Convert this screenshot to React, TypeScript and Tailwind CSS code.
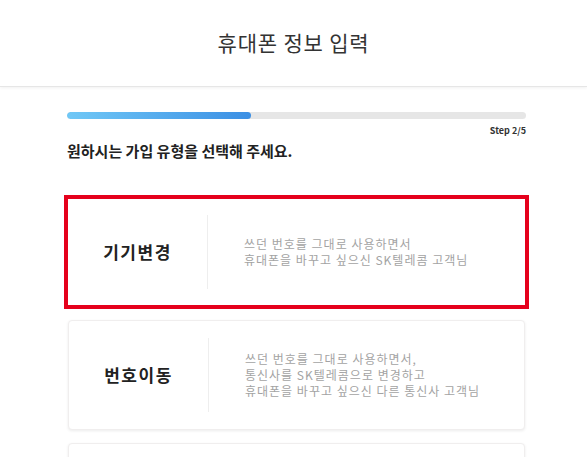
import React from 'react';

const font = { fontFamily: '"Noto Sans CJK KR", "Noto Sans", sans-serif' };

type Plan = { title: string; lines: string[]; selected?: boolean };

const plans: Plan[] = [
    { title: '기기변경', lines: ['쓰던 번호를 그대로 사용하면서', '휴대폰을 바꾸고 싶으신 SK텔레콤 고객님'], selected: true },
    { title: '번호이동', lines: ['쓰던 번호를 그대로 사용하면서,', '통신사를 SK텔레콤으로 변경하고', '휴대폰을 바꾸고 싶으신 다른 통신사 고객님'] },
];

const PlanCard: React.FC<{ plan: Plan }> = ({ plan }) => {
    const box = plan.selected
        ? 'border-4 border-[#e5001c] -mx-[4px] h-[114px]'
        : 'border border-[#f0eeee] rounded-[4px] shadow-[0_1px_3px_rgba(0,0,0,0.08)] h-[110px]';
    return (
        <div className={`bg-white flex items-center ${box}`}>
            <div className="flex items-center justify-center shrink-0 w-[139px]">
                <span className="text-[17px] font-bold text-[#222] tracking-[1.5px]">{plan.title}</span>
            </div>
            <div className="w-px h-[74px] bg-[#eeeeee]" />
            <div className="pl-[36px] text-[12px] leading-[16px] tracking-[1px] text-[#a3a3a3]">
                {plan.lines.map((l) => (
                    <div key={l}>{l}</div>
                ))}
            </div>
        </div>
    );
};

export default function App() {
    return (
        <div className="w-[587px] h-[457px] overflow-hidden bg-white" style={font}>
            <header className="h-[87px] flex items-center justify-center border-b border-[#e6e6e6] shadow-[0_1px_3px_rgba(0,0,0,0.06)]">
                <h1 className="text-[21px] tracking-[0.8px] text-[#333]">휴대폰 정보 입력</h1>
            </header>
            <main className="pl-[67px] pr-[61px] pt-[25px]">
                <div className="h-[7px] rounded-full bg-[#e6e6e6] overflow-hidden">
                    <div className="h-full w-[40%] rounded-full bg-gradient-to-r from-[#70c8f6] to-[#3b8fe4]" />
                </div>
                <div className="mt-[6px] text-right text-[9px] leading-[12px] font-bold text-[#333]">Step 2/5</div>
                <p className="mt-[4px] text-[15px] leading-[20px] font-bold text-[#222]">원하시는 가입 유형을 선택해 주세요.</p>
                <div className="mt-[34px] flex flex-col gap-[11px] pl-px pr-px">
                    {plans.map((p) => (
                        <PlanCard key={p.title} plan={p} />
                    ))}
                    <div className="h-[110px] mt-[2px] bg-white border border-[#f0eeee] rounded-[4px] shadow-[0_1px_3px_rgba(0,0,0,0.08)]" />
                </div>
            </main>
        </div>
    );
}
